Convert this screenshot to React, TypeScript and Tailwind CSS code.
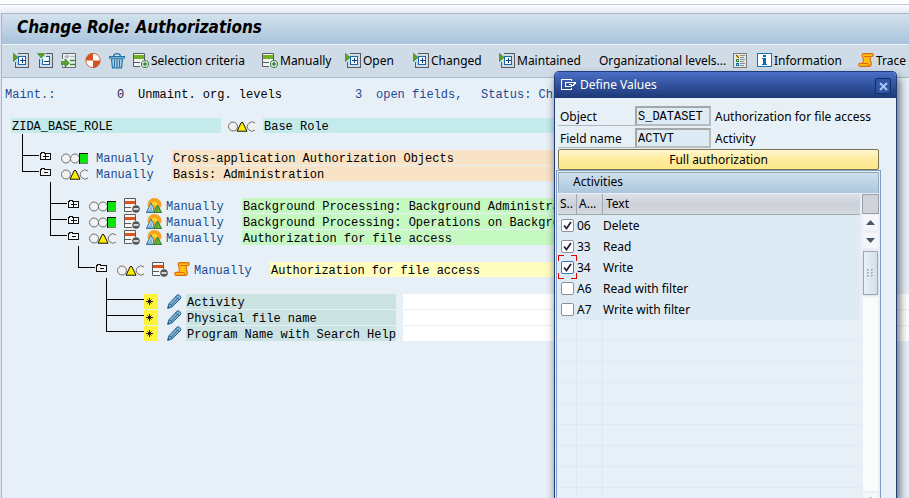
import type { ReactNode } from "react";

const SANS = "font-['Noto_Sans','Open_Sans',sans-serif]";
const MONO = "font-['Liberation_Mono','Courier_New',monospace]";

/* ---------- toolbar icons ---------- */

function ExpandIcon() {
  return (
    <svg width="16" height="16" viewBox="0 0 16 16" shapeRendering="crispEdges" aria-hidden="true">
      <path d="M5 .5h10.500v14H2.500V9" fill="none" stroke="#5a5a5a" />
      <rect x="5.500" y="3.500" width="7" height="8" fill="#f4f8fb" stroke="#1668a8" />
      <path d="M7 7.500h5M9.500 5v5" stroke="#123f86" fill="none" />
      <path d="M.4 .4l4.600 4-4.600 4z" fill="#5fa01c" stroke="#3c8a30" strokeWidth=".8" shapeRendering="auto" />
    </svg>
  );
}

function CollapseIcon() {
  return (
    <svg width="16" height="16" viewBox="0 0 16 16" shapeRendering="crispEdges" aria-hidden="true">
      <path d="M9 .5h6.500v14H2.500V6" fill="none" stroke="#5a5a5a" />
      <path d="M9 3.500h3.500v8H5.500V6" fill="#f4f8fb" stroke="#1668a8" />
      <path d="M7 8.500h5" stroke="#123f86" />
      <path d="M.6 .4h7.200L4.200 5z" fill="#5fa01c" stroke="#3c8a30" strokeWidth=".8" shapeRendering="auto" />
    </svg>
  );
}

function InsertRowsIcon() {
  return (
    <svg width="16" height="16" viewBox="0 0 16 16" aria-hidden="true">
      <path d="M1.500 6V.5h13v14h-13v-2" fill="#edf3f7" stroke="#6a6a6a" />
      <path d="M3 3.500h4M9 3.500h5" stroke="#b9bec2" strokeWidth="1.500" />
      <path d="M5.500 1l3 2.500-3 2.500z" fill="#a9afb4" />
      <path d="M9 7.500h5M9 11.500h5" stroke="#3f8a2c" strokeWidth="1.500" />
      <path d="M.5 8.500h3.500V5.800L8.500 10l-4.500 4.200v-2.700H.5z" fill="#58a12a" stroke="#2f7a30" strokeWidth=".7" />
    </svg>
  );
}

function StatusBallIcon() {
  return (
    <svg width="16" height="16" viewBox="0 0 16 16" aria-hidden="true">
      <circle cx="8" cy="7.500" r="7.200" fill="#fff" stroke="#d4501c" strokeWidth=".9" />
      <path d="M8 7.500V.3A7.200 7.200 0 0 0 .8 7.500zM8 7.500v7.200A7.200 7.200 0 0 0 15.200 7.500z" fill="#d4501c" />
    </svg>
  );
}

function TrashIcon() {
  return (
    <svg width="16" height="16" viewBox="0 0 16 16" fill="none" stroke="#2272a6" aria-hidden="true">
      <path d="M.5 3.500h15v1.500H.500zM4.500 3C5 1 6.500.7 8 .7S11 1 11.500 3" strokeWidth="1.200" fill="#cfe3f0" />
      <path d="M2.500 6h11l-1 8.900h-9z" fill="#c3dced" strokeWidth="1.200" />
      <path d="M5.500 7v7M8 7v7M10.500 7v7" strokeWidth="1.300" />
    </svg>
  );
}

function AddRowIcon() {
  return (
    <svg width="16" height="16" viewBox="0 0 16 16" aria-hidden="true">
      <path d="M11.500 7V.5H.5v13H7" fill="#f2f5f8" stroke="#5a5a5a" />
      <path d="M1 2h10v4H1z" fill="#6fb01c" />
      <path d="M1 9.500h6" stroke="#5a5a5a" />
      <circle cx="12" cy="11" r="3.600" fill="#f4f8f4" stroke="#3a7d3f" strokeWidth="1" />
      <path d="M9.800 11h4.400M12 8.800v4.400" stroke="#2f7a3a" strokeWidth="1.300" />
    </svg>
  );
}

function LegendIcon() {
  return (
    <svg width="14" height="16" viewBox="0 0 14 16" shapeRendering="crispEdges" aria-hidden="true">
      <rect x=".5" y=".5" width="13" height="14" fill="#e4e8ea" stroke="#7a7a7a" />
      <path d="M3 2h3v3H3z" fill="#e8c84a" />
      <path d="M3 2h1v1h1v1h1v1H5V4H4V3H3z" fill="#5a3a10" />
      <path d="M3 6h3v3H3z" fill="#2f8a3a" />
      <path d="M3 10h3v3H3z" fill="#1668a8" />
      <path d="M4 7h1v1H4zM4 11h1v1H4z" fill="#dbeaf2" />
      <path d="M7 2.500h5M7 4.500h4M7 6.500h5M7 8.500h4M7 10.500h5M7 12.500h4" stroke="#8a8f94" />
    </svg>
  );
}

function InfoIcon() {
  return (
    <svg width="15" height="15" viewBox="0 0 15 15" shapeRendering="crispEdges" aria-hidden="true">
      <rect x=".5" y=".5" width="14" height="13" fill="#fff" stroke="#0a78b8" />
      <path d="M6 2h3v2H6zM5 5h4v6h1v1H5v-1h1V6H5z" fill="#0a6cb0" />
    </svg>
  );
}

function ScrollIcon() {
  return (
    <svg width="16" height="15" viewBox="0 0 16 15" aria-hidden="true">
      <path
        d="M4.500 3.500C3.500 1.500 4.500.6 6 .6h8.300c1.400.6 1.200 2.700-.5 2.900h-1.300c-.6 2.500-.6 4 .8 6.500v1.500c0 1.200-.6 1.900-1.800 1.900H2C.4 13.400.2 10.300 2 10.200h3C5.600 8 5.600 6 4.500 3.500z"
        fill="#fdc010"
        stroke="#dd6a10"
        strokeWidth="1.100"
      />
      <path d="M6 3.500h6.500M2.500 10.500h7.300c1 .4 1 1.800.5 2.500" fill="none" stroke="#dd6a10" />
    </svg>
  );
}

/* ---------- tree icons ---------- */

function FolderIcon({ open }: { open: boolean }) {
  return (
    <svg width="12" height="9" viewBox="0 0 12 9" fill="none" stroke="#111" shapeRendering="crispEdges" aria-hidden="true">
      <path d="M.5 7.500V1.500h1v-1h3v1h6v6z" fill="#f4f7fa" />
      <path d={open ? "M4 4.500h4" : "M3 4.500h6M5.500 2v5"} />
    </svg>
  );
}

function Lights({ state }: { state: "green" | "yellow" }) {
  return (
    <svg width="28" height="11" viewBox="0 0 28 11" fill="#f1f1f1" stroke="#6e6e6e" aria-hidden="true">
      <circle cx="5" cy="5.500" r="4.500" />
      {state === "green" ? (
        <>
          <circle cx="14" cy="5.500" r="4.500" />
          <g shapeRendering="crispEdges">
            <path d="M19 1h8v9h-8z" fill="#0be40b" stroke="none" />
            <path d="M18.500 0v11M18 .5h9" stroke="#111" />
            <path d="M19 10.500h8" stroke="#777" />
          </g>
        </>
      ) : (
        <>
          <path d="M27 2A4.600 4.600 0 1 0 27 9" />
          <path d="M9 10.200l4-8.200q1-1.700 2 0l4 8.200z" fill="#ffee00" stroke="#111" />
        </>
      )}
    </svg>
  );
}

function ObjectIcon() {
  return (
    <svg width="16" height="16" viewBox="0 0 16 16" aria-hidden="true">
      <path d="M11.500 7V.5H.5v13H8" fill="#f4f6f8" stroke="#5a5a5a" />
      <path d="M1 3h10v3H1z" fill="#dd5218" />
      <path d="M1 9.500h6" stroke="#5a5a5a" />
      <circle cx="12" cy="11" r="3.800" fill="#565656" />
      <path d="M9.500 11h5" stroke="#fff" strokeWidth="1.500" />
    </svg>
  );
}

function LandscapeIcon() {
  return (
    <svg width="16" height="15" viewBox="0 0 16 15" aria-hidden="true">
      <path d="M2.500 8.500C1 3 5 .5 8.500.5s7.500 3 6.300 7.500L12 12z" fill="#fba919" stroke="#f08a14" strokeWidth=".8" />
      <path d="M5 7.500a3.500 3.500 0 0 1 7 0z" fill="#fdd02b" />
      <path d="M5 5L.4 14.500h8.200L7 9z" fill="#7fb4d4" stroke="#2a6487" strokeWidth=".9" />
      <path d="M5 6.500l-2 6M6 8l1 5" stroke="#d8ecf6" strokeWidth=".8" />
      <path d="M11.500 7l-4 7.500h8.200z" fill="#62b030" stroke="#2f7a2c" strokeWidth=".9" />
    </svg>
  );
}

function PencilIcon() {
  return (
    <svg width="15" height="15" viewBox="0 0 15 15" aria-hidden="true">
      <path d="M.7 14.300l1.200-4.500 8-8.600c1.600-1.400 4.800 1.200 3.600 3.300l-8.500 8.500z" fill="#7fb0d2" stroke="#24648f" strokeWidth="1" />
      <path d="M2 10c1.500 0 2.700 1 3 2.800M8.800 2.500l3.500 3.300M4 11.500l7-7.500" fill="none" stroke="#24648f" strokeWidth=".9" />
      <path d="M.5 14.500l.6-2.200 1.600 1.500z" fill="#163f5c" />
    </svg>
  );
}

function StarMark() {
  return (
    <span className="flex h-[15px] w-[14px] items-center bg-[#fff43a] pl-[2px]">
      <svg width="7" height="7" viewBox="0 0 7 7" fill="none" stroke="#111" aria-hidden="true">
        <path d="M0 3.500h7M3.500 0v7M1.500 1.500l4 4M5.500 1.500l-4 4" strokeWidth=".9" />
      </svg>
    </span>
  );
}

/* ---------- toolbar ---------- */

function ToolButton({ width, icon, children, label }: { width: string; icon?: ReactNode; children?: ReactNode; label?: string }) {
  return (
    <button type="button" aria-label={label} className={`flex shrink-0 items-center gap-[2px] whitespace-nowrap text-left ${width}`}>
      {icon}
      {children}
    </button>
  );
}

function Toolbar() {
  return (
    <div className="flex h-[33px] items-center border-b border-[#a9bccb] bg-[#cfdce7] pb-px pl-[11px] text-[12px]">
      <ToolButton width="w-[24px]" icon={<ExpandIcon />} label="Expand" />
      <ToolButton width="w-[24px]" icon={<CollapseIcon />} label="Collapse" />
      <ToolButton width="w-[24px]" icon={<InsertRowsIcon />} label="Insert" />
      <ToolButton width="w-[24px]" icon={<StatusBallIcon />} label="Generate" />
      <ToolButton width="w-[24px]" icon={<TrashIcon />} label="Delete" />
      <ToolButton width="w-[129px]" icon={<AddRowIcon />}>Selection criteria</ToolButton>
      <ToolButton width="w-[83px]" icon={<AddRowIcon />}>Manually</ToolButton>
      <ToolButton width="w-[68px]" icon={<ExpandIcon />}>Open</ToolButton>
      <ToolButton width="w-[86px]" icon={<ExpandIcon />}>Changed</ToolButton>
      <ToolButton width="w-[100px]" icon={<ExpandIcon />}>Maintained</ToolButton>
      <ToolButton width="w-[134px]">Organizational levels...</ToolButton>
      <ToolButton width="w-[24px]" icon={<LegendIcon />} label="Legend" />
      <ToolButton width="w-[101px]" icon={<InfoIcon />}>Information</ToolButton>
      <ToolButton width="w-[60px]" icon={<ScrollIcon />}>Trace</ToolButton>
    </div>
  );
}

/* ---------- tree ---------- */

const INDENT = ["pl-[20px]", "pl-[48px]", "pl-[76px]", "pl-[104px]"];

function Branch({ last, long }: { last: boolean; long?: boolean }) {
  return (
    <span className={`flex h-[16px] shrink-0 flex-col ${long ? "w-[38px]" : "w-[18px]"}`}>
      <span className={`h-[6px] border-b border-l border-black ${long ? "" : "mr-px"}`} />
      {!last && <span className="flex-1 border-l border-black" />}
    </span>
  );
}

function Gap({ depth }: { depth: number }) {
  return (
    <li className={`flex h-[16px] ${INDENT[depth]}`} aria-hidden="true">
      <span className="border-l border-black" />
    </li>
  );
}

type NodeProps = {
  depth: number;
  open?: boolean;
  last?: boolean;
  state: "green" | "yellow";
  icon?: ReactNode;
  text: string;
  color: string;
};

function Node({ depth, open = false, last = false, state, icon, text, color }: NodeProps) {
  return (
    <li className={`flex h-[16px] items-start ${INDENT[depth]}`}>
      <Branch last={last} />
      <button type="button" className="w-[21px] shrink-0 pt-[2px]" aria-label={open ? "Collapse node" : "Expand node"}>
        <FolderIcon open={open} />
      </button>
      <span className="flex h-[16px] w-[35px] shrink-0 items-center">
        <Lights state={state} />
      </span>
      {icon && (
        <span className="flex w-[42px] shrink-0 gap-[6px]">
          <ObjectIcon />
          {icon}
        </span>
      )}
      <span className="w-[76px] shrink-0 text-[#1b4a94]">Manually</span>
      <span className={`h-[15px] min-w-0 flex-1 overflow-hidden pl-px ${color}`}>{text}</span>
    </li>
  );
}

function Field({ text, last = false }: { text: string; last?: boolean }) {
  return (
    <li className="flex h-[16px] items-start pl-[104px]">
      <Branch last={last} long />
      <StarMark />
      <span className="flex w-[28px] shrink-0 justify-end pr-[4px]">
        <PencilIcon />
      </span>
      <span className="h-[15px] w-[210px] shrink-0 bg-[#cce3e3] pl-px">{text}</span>
      <span className="ml-[7px] h-[15px] flex-1 bg-white" />
    </li>
  );
}

function Tree() {
  return (
    <div className={`${MONO} whitespace-pre pt-[8px] text-[12px] leading-[18px] text-black`}>
      <div className="flex h-[16px] overflow-hidden pl-[3px] pr-[355px] text-[#1b4a94]">
        <span className="w-[112px] shrink-0">Maint.:</span>
        <span className="w-[21px] shrink-0 text-[#1c1c50]">0</span>
        <span className="w-[217px] shrink-0 text-black">Unmaint. org. levels</span>
        <span className="w-[21px] shrink-0">3</span>
        <span className="w-[105px] shrink-0">open fields,</span>
        <span className="min-w-0 flex-1 overflow-hidden">Status: Cha</span>
      </div>
      <div className="mt-[16px] flex h-[16px] items-start pl-[9px] pr-[355px]">
        <span className="h-[15px] w-[210px] bg-[#c4eaec] pl-px">ZIDA_BASE_ROLE</span>
        <span className="flex h-[16px] w-[42px] items-center justify-center">
          <Lights state="yellow" />
        </span>
        <span className="h-[15px] flex-1 bg-[#c4eaec] pl-px">Base Role</span>
      </div>
      <ul className="pr-[355px]">
        <Gap depth={0} />
        <Node depth={0} state="green" text="Cross-application Authorization Objects" color="bg-[#f8e3c6]" />
        <Node depth={0} open last state="yellow" text="Basis: Administration" color="bg-[#f8e3c6]" />
        <Gap depth={1} />
        <Node depth={1} state="green" icon={<LandscapeIcon />} text="Background Processing: Background Administrat" color="bg-[#c6f8c2]" />
        <Node depth={1} state="green" icon={<LandscapeIcon />} text="Background Processing: Operations on Backgrou" color="bg-[#c6f8c2]" />
        <Node depth={1} open last state="yellow" icon={<LandscapeIcon />} text="Authorization for file access" color="bg-[#c6f8c2]" />
        <Gap depth={2} />
        <Node depth={2} open last state="yellow" icon={<ScrollIcon />} text="Authorization for file access" color="bg-[#fffdbf]" />
      </ul>
      <ul>
        <Gap depth={3} />
        <Field text="Activity" />
        <Field text="Physical file name" />
        <Field text="Program Name with Search Help" last />
      </ul>
    </div>
  );
}

/* ---------- dialog ---------- */

const ACTIVITIES = [
  { code: "06", text: "Delete", checked: true },
  { code: "33", text: "Read", checked: true },
  { code: "34", text: "Write", checked: true, focus: true },
  { code: "A6", text: "Read with filter", checked: false },
  { code: "A7", text: "Write with filter", checked: false },
];

function Check({ label, checked, focus }: { label: string; checked: boolean; focus?: boolean }) {
  return (
    <span className="relative grid h-[21px] w-[19px] place-items-center">
      <input
        type="checkbox"
        defaultChecked={checked}
        aria-label={label}
        className={`peer col-start-1 row-start-1 size-[13px] appearance-none rounded-[2px] border bg-white ${focus ? "border-[#3c76b4]" : "border-[#8c9196]"}`}
      />
      <svg className="pointer-events-none col-start-1 row-start-1 hidden peer-checked:block" width="9" height="9" viewBox="0 0 9 9" aria-hidden="true">
        <path d="M1 4.500l2.500 3L8 1" fill="none" stroke="#23233f" strokeWidth="1.800" />
      </svg>
      {focus && (
        <svg className="pointer-events-none absolute -top-[2px] left-0 z-10" width="19" height="24" viewBox="0 0 19 24" fill="none" stroke="#e00000" shapeRendering="crispEdges" aria-hidden="true">
          <path d="M.5 6V.5H6M13 .5h5.500V6M.5 18v5.500H6M13 23.500h5.500V18" />
        </svg>
      )}
    </span>
  );
}

function KeyField({ id, label, value, text }: { id: string; label: string; value: string; text: string }) {
  return (
    <div className="flex h-[20px] items-stretch leading-[21px]">
      <label htmlFor={id} className="w-[77px] border-b border-[#b4b9bd] pl-[2px]">
        {label}
      </label>
      <input
        id={id}
        readOnly
        defaultValue={value}
        className={`${MONO} w-[76px] border-2 border-[#a3a7aa] border-b-[#b9bdc0] border-r-[#b9bdc0] bg-[#deebf5] pl-px pt-[3px] text-[12px] text-black outline-none`}
      />
      <span className="pl-[4px]">{text}</span>
    </div>
  );
}

function Scrollbar() {
  return (
    <div className="ml-px flex w-[18px] flex-col items-center bg-[#ebeff5]">
      <span className="h-[20px] w-[17px] shrink-0 border border-[#98a0aa] bg-[#d0d4da]" />
      <button type="button" aria-label="Scroll up" className="mt-px flex h-[15px] w-[15px] shrink-0 items-center justify-center bg-[#f4f6fa]">
        <svg width="9" height="5" viewBox="0 0 9 5" aria-hidden="true"><path d="M0 5l4.500-5L9 5z" fill="#44586a" /></svg>
      </button>
      <button type="button" aria-label="Scroll down" className="mt-[3px] flex h-[15px] w-[15px] shrink-0 items-center justify-center bg-[#f4f6fa]">
        <svg width="9" height="5" viewBox="0 0 9 5" aria-hidden="true"><path d="M0 0l4.500 5L9 0z" fill="#44586a" /></svg>
      </button>
      <div className="mt-[3px] w-[15px] flex-1 bg-[#fafcfc]">
        <div className="flex h-[44px] items-center justify-center border border-[#9aaabb] bg-linear-to-r from-[#e9f1f8] to-[#d2dfeb] shadow-sm">
          <svg width="7" height="9" viewBox="0 0 7 9" fill="#a3b1bf" shapeRendering="crispEdges" aria-hidden="true">
            <path d="M0 0h2v1H1v1H0zM4 0h2v1H5v1H4zM0 3h2v1H1v1H0zM4 3h2v1H5v1H4zM0 6h2v1H1v1H0zM4 6h2v1H5v1H4z" />
          </svg>
        </div>
      </div>
      <button type="button" aria-label="Scroll page up" className="mt-[2px] flex h-[5px] w-[15px] shrink-0 items-end justify-center bg-[#f6f7fb]">
        <span className="h-px w-[3px] bg-[#c2c8d0]" />
      </button>
    </div>
  );
}

function Dialog() {
  return (
    <section
      role="dialog"
      aria-label="Define Values"
      className="absolute bottom-0 right-[12px] top-[71px] flex w-[343px] flex-col overflow-hidden rounded-t-[5px] border border-b-0 border-[#1f3d7d] bg-[#e8f0f7] text-[12px] text-black shadow-[2px_6px_9px_1px_rgba(0,0,0,0.55)]"
    >
      <header className="flex h-[26px] shrink-0 items-center bg-linear-to-b from-[#4a6fc6] to-[#1c3876] pl-[6px] pr-[5px] text-white">
        <svg width="15" height="12" viewBox="0 0 15 12" fill="none" stroke="#fff" shapeRendering="crispEdges" aria-hidden="true">
          <path d="M10.500 2V.5H.5v10h10V9" />
          <path d="M4 3.500h10.500v1h-1v1h-1v1h-2v1H4.500v-4M8 5.500h3" />
        </svg>
        <h2 className="flex-1 pl-[4px]">Define Values</h2>
        <button type="button" aria-label="Close" className="mt-[2px] flex size-[16px] items-center justify-center rounded-[2px] border border-[#122c66] bg-[#3055a4]">
          <svg width="9" height="9" viewBox="0 0 9 9" stroke="#a9c6fa" strokeWidth="2" aria-hidden="true">
            <path d="M1 1l7 7M8 1L1 8" />
          </svg>
        </button>
      </header>
      <div className="flex flex-col gap-[2px] pl-[3px] pt-[8px]">
        <KeyField id="object" label="Object" value="S_DATASET" text="Authorization for file access" />
        <KeyField id="field-name" label="Field name" value="ACTVT" text="Activity" />
      </div>
      <button
        type="button"
        className="ml-[3px] mr-[17px] mt-px h-[21px] shrink-0 rounded-[2px] border border-[#7a7354] bg-linear-to-b from-[#fff6cf] via-[#ffec9c] to-[#fde88c] leading-[20px]"
      >
        Full authorization
      </button>
      <div className="ml-px mr-[15px] flex min-h-0 flex-1 flex-col border border-b-0 border-[#7f9fc4] px-px pt-px">
        <h3 className="h-[21px] shrink-0 border border-b-0 border-[#94a9be] bg-linear-to-b from-[#cfdfec] to-[#adc6dd] pl-[14px] leading-[18px]">Activities</h3>
        <div className="flex min-h-0 flex-1 overflow-hidden pt-px">
          <div className="min-w-0 flex-1 overflow-hidden">
            <table className="w-full table-fixed border-separate border-spacing-0">
              <colgroup>
                <col className="w-[19px]" />
                <col className="w-[26px]" />
                <col />
              </colgroup>
              <thead>
                <tr className="h-[21px] bg-linear-to-b from-[#dde0e5] via-[#cdd1da] to-[#d6dadd] text-left">
                  <th className="border-b border-r border-[#9ea9b2] pl-[2px] font-normal leading-[18px]">S..</th>
                  <th className="border-b border-r border-[#9ea9b2] pl-[2px] font-normal leading-[18px]">A...</th>
                  <th className="border-b border-[#9ea9b2] pl-[3px] font-normal leading-[18px]">Text</th>
                </tr>
              </thead>
              <tbody>
                {ACTIVITIES.map((a) => (
                  <tr key={a.code} className="h-[21px] bg-[#deebf5] leading-[21px]">
                    <td><Check label={a.text} checked={a.checked} focus={a.focus} /></td>
                    <td>{a.code}</td>
                    <td>{a.text}</td>
                  </tr>
                ))}
                {Array.from({ length: 9 }, (_, i) => (
                  <tr key={i} className="h-[21px]">
                    <td className="border-b border-r border-[#dce9f5]" />
                    <td className="border-b border-r border-[#dce9f5]" />
                    <td className="border-b border-[#dce9f5]" />
                  </tr>
                ))}
              </tbody>
            </table>
          </div>
          <Scrollbar />
        </div>
      </div>
    </section>
  );
}

export default function App() {
  return (
    <div className={`${SANS} relative h-screen overflow-hidden bg-white pt-[4px] text-black`}>
      <div className="flex h-full flex-col border-t border-[#c3c9dc] bg-[#e0e4f0]">
        <div className="h-[8px] shrink-0 bg-linear-to-b from-[#fbfcff] to-[#e6eaf4]" />
        <main className="ml-px flex-1 border-l border-t border-[#a7b6c8] bg-[#e8f0f7]">
          <h1 className="h-[31px] border-b border-[#eef4f8] bg-linear-to-b from-[#d3e2ed] to-[#a9c3dc] pl-[15px] font-['DejaVu_Sans_Condensed','DejaVu_Sans',sans-serif] text-[17px] font-bold italic leading-[27px]">
            Change Role: Authorizations
          </h1>
          <Toolbar />
          <Tree />
        </main>
      </div>
      <Dialog />
    </div>
  );
}
